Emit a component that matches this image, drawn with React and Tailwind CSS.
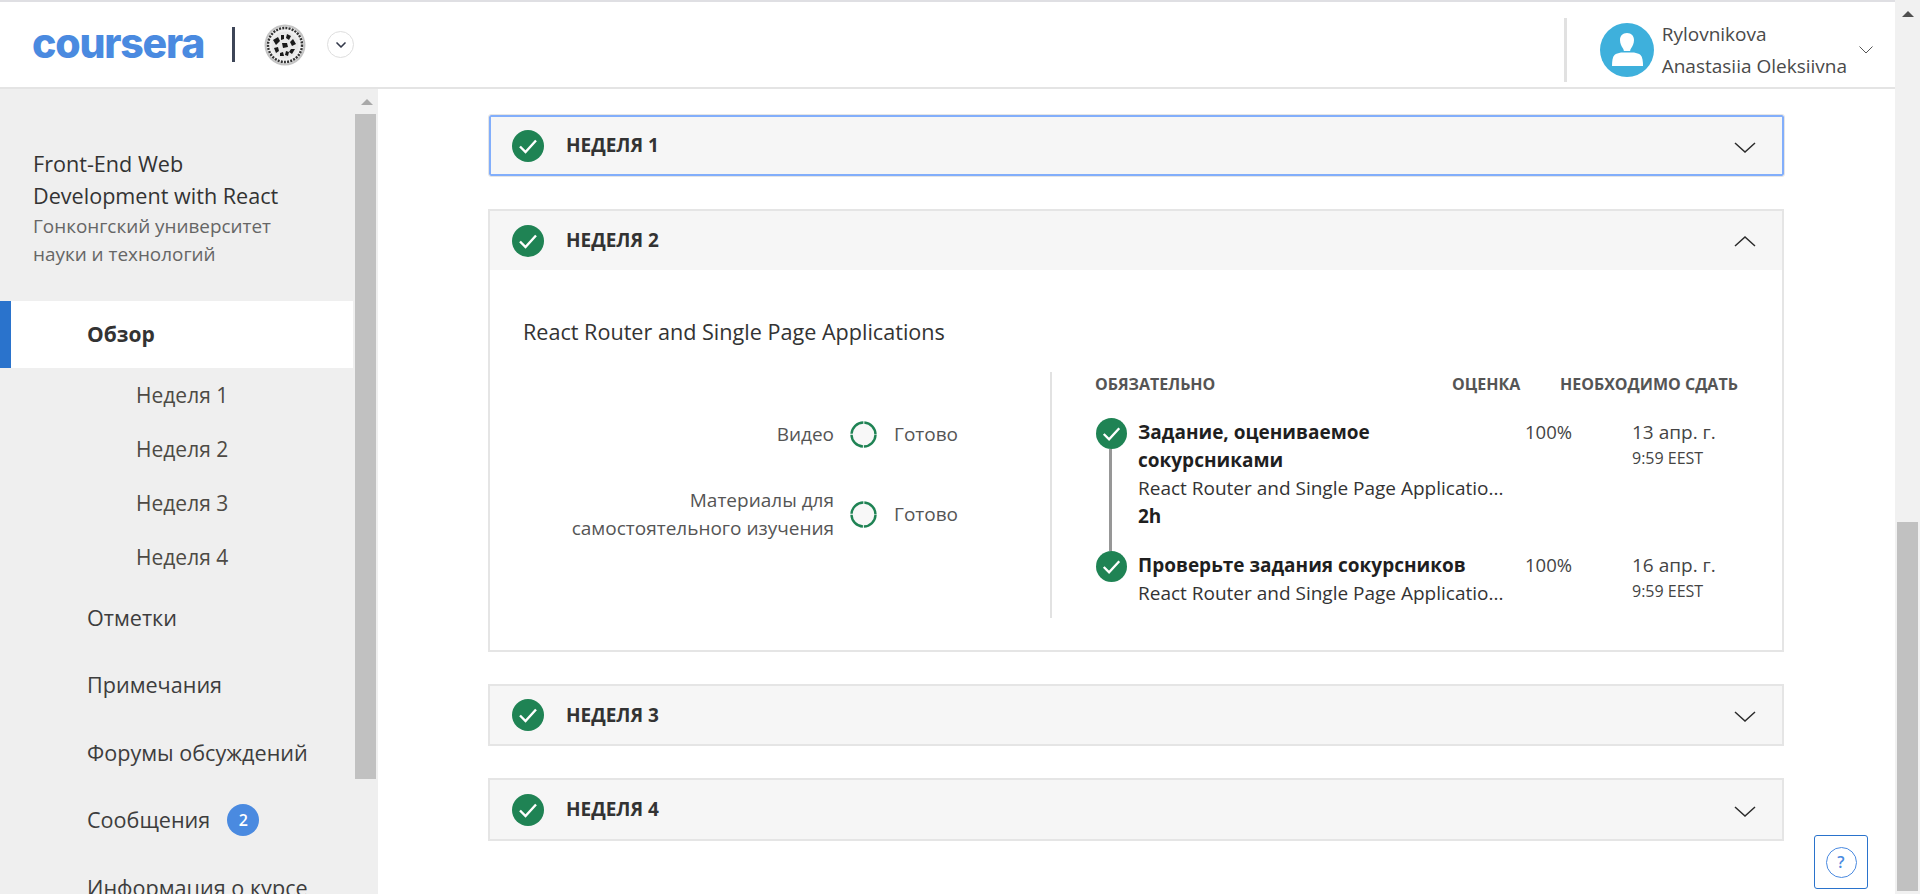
import { ChevronDown } from 'lucide-react';

const font = { fontFamily: '"Open Sans", "Noto Sans", sans-serif' };

function CheckBadge({ size = 32 }) {
  return (
    <svg width={size} height={size} viewBox="0 0 32 32" className="shrink-0">
      <circle cx="16" cy="16" r="16" fill="#1f8354" />
      <path d="M8 16.5l5.5 5.5L24 10.5" fill="none" stroke="#fff" strokeWidth="2.4" />
    </svg>
  );
}

function Chevron({ up }) {
  return (
    <svg width="24" height="14" viewBox="0 0 24 14" className="shrink-0">
      <path d={up ? 'M2 12L12 3l10 9' : 'M2 2l10 9 10-9'} fill="none" stroke="#2b2b2b" strokeWidth="1.5" />
    </svg>
  );
}

function Ring() {
  return (
    <svg width="27" height="27" viewBox="0 0 27 27" className="shrink-0">
      <circle cx="13.5" cy="13.5" r="12" fill="#f8f8f8" />
      <circle cx="13.5" cy="13.5" r="12" fill="none" stroke="#1f8354" strokeWidth="2.4" strokeDasharray="17.85 1" strokeDashoffset="-0.5" />
    </svg>
  );
}

function Seal() {
  return (
    <svg width="42" height="42" viewBox="0 0 42 42" className="shrink-0">
      <circle cx="21" cy="21" r="20.5" fill="#c4c4c4" />
      <circle cx="21" cy="21" r="18.5" fill="#f0f0f0" />
      <circle cx="21" cy="21" r="17" fill="none" stroke="#333" strokeWidth="2.4" strokeDasharray="2 1.2" />
      <circle cx="21" cy="21" r="13.5" fill="#e8e8e8" />
      <path d="M9 16l5-3 2 4-4 4zM17 11l3 0 0 4-3 1zM23 10l4 2-2 4-3-2zM29 15l3 5-4 2-2-4zM10 24l4-1 1 4-3 2zM18 19l5 0 1 4-5 1zM27 25l4 0-3 5-3-2zM16 29l3-1 1 4-4 0zM22 27l3 1-1 4-3-1z" fill="#1a1a1a" />
    </svg>
  );
}

function Logo() {
  return (
    <span className="text-[41px] leading-none font-extrabold tracking-[-1.2px] text-[#4a8ae0]" style={{ fontFamily: 'Inter, sans-serif' }}>
      coursera
    </span>
  );
}

function Header() {
  return (
    <header className="h-[89px] shrink-0 flex items-center bg-white border-t-2 border-b-2 border-t-[#dfdfe3] border-b-[#e4e4e4]">
      <div className="ml-8 mb-[2px] w-[172px] flex items-center h-9"><Logo /></div>
      <div className="ml-7 w-[3px] h-[35px] bg-[#3d4557]"></div>
      <div className="ml-[29px]"><Seal /></div>
      <div className="ml-[21px] w-[27px] h-[27px] rounded-full border border-[#dedede] flex items-center justify-center">
        <ChevronDown size={16} strokeWidth={2.5} color="#33394a" />
      </div>
      <div className="ml-auto mt-[10px] flex items-center">
        <div className="w-[3px] h-[64px] bg-[#e1e1e1]"></div>
        <div className="ml-[33px] w-[54px] h-[54px] rounded-full bg-[#3eb0dc] shrink-0 flex items-center justify-center">
          <svg width="54" height="54" viewBox="0 0 54 54">
            <path d="M27 10c-4.500 0-7 3-7 7 0 3.500 1.500 6.500 3 8.500 .6 1 .8 1.500 .8 2.500h6.400c0-1 .2-1.500 .8-2.500 1.500-2 3-5 3-8.500 0-4-2.500-7-7-7z" fill="#fff" />
            <path d="M12 43c0-5 .5-9 2.500-11 1.500-1.500 4-2 6.500-2.500h13c2.500 .5 5 1 6.500 2.500 2 2 2.500 6 2.500 11z" fill="#fff" />
          </svg>
        </div>
        <div className="ml-2 text-[19px] leading-8 text-[#4a4a4a] whitespace-nowrap">
          <div>Rylovnikova</div>
          <div>Anastasiia Oleksiivna</div>
        </div>
        <svg width="14" height="8" viewBox="0 0 14 8" className="ml-3 mr-[22px] shrink-0">
          <path d="M0.5 0.5L7 7l6.500-6.500" fill="none" stroke="#555" strokeWidth="1" />
        </svg>
      </div>
    </header>
  );
}

const weeks = ['Неделя 1', 'Неделя 2', 'Неделя 3', 'Неделя 4'];

function Sidebar() {
  return (
    <aside className="w-[378px] shrink-0 bg-[#efefef] flex overflow-hidden">
      <div className="w-[353px] shrink-0">
        <div className="pl-[33px] pt-[59px] pb-[33px]">
          <div className="text-[21.6px] leading-8 text-[#333]">
            <div>Front-End Web</div>
            <div>Development with React</div>
          </div>
          <div className="text-[18.9px] leading-7 text-[#666]">
            <div>Гонконгский университет</div>
            <div>науки и технологий</div>
          </div>
        </div>
        <div className="h-[67px] bg-white border-l-[11px] border-l-[#2a73cc] pl-[76px] flex items-center text-[21px] font-bold text-[#333]">
          Обзор
        </div>
        <div className="pt-px">
          {weeks.map((w) => (
            <div key={w} className="h-[54px] pl-[136px] flex items-center text-[21px] text-[#4d4a45]">{w}</div>
          ))}
        </div>
        <div className="-mt-px text-[21.6px] text-[#3d3d3d]">
          <div className="h-[67.5px] pl-[87px] flex items-center">Отметки</div>
          <div className="h-[67.5px] pl-[87px] flex items-center">Примечания</div>
          <div className="h-[67.5px] pl-[87px] flex items-center">Форумы обсуждений</div>
          <div className="h-[67.5px] pl-[87px] flex items-center">
            Сообщения
            <span className="ml-[17px] w-8 h-8 rounded-full bg-[#4a8ae0] text-white text-[16px] font-semibold flex items-center justify-center">2</span>
          </div>
          <div className="h-[67.5px] pl-[87px] flex items-center whitespace-nowrap">Информация о курсе</div>
        </div>
      </div>
      <div className="w-[23px] shrink-0 ml-[2px] flex flex-col items-stretch">
        <div className="h-[25px] flex items-center justify-center">
          <div className="w-0 h-0 border-l-[6px] border-r-[6px] border-b-[6px] border-l-transparent border-r-transparent border-b-[#a9a9a9]"></div>
        </div>
        <div className="h-[665px] w-[21px] bg-[#c1c1c1]"></div>
      </div>
    </aside>
  );
}

function WeekRow({ label, up, focused, height = 'h-[59px]' }) {
  return (
    <div className={`flex items-center bg-[#f6f6f6] pr-[25px] ${focused ? 'h-[61px] ml-px pl-[21px] border-2 border-[#82aefb] rounded-[2px] outline outline-1 outline-[#e5e5e5]' : `${height} pl-[22px]`}`}>
      <CheckBadge />
      <div className="ml-[22px] text-[19px] font-bold text-[#333] uppercase">{label}</div>
      <div className={`ml-auto ${up ? '' : 'mt-1'}`}><Chevron up={up} /></div>
    </div>
  );
}

function ClosedWeek({ label, focused, height }) {
  if (focused) return <WeekRow label={label} focused />;
  return (
    <div className="border-2 border-[#e5e5e5]">
      <WeekRow label={label} height={height} />
    </div>
  );
}

function TaskRow({ title, time, date, last }) {
  return (
    <div className="flex">
      <div className="w-[43px] shrink-0 flex flex-col pl-px">
        <CheckBadge size={31} />
        {!last && <div className="ml-[13px] w-[3px] flex-1 bg-[#979797]"></div>}
      </div>
      <div className={`w-[387px] shrink-0 text-[19px] leading-7 ${last ? '' : 'pb-[21px]'}`}>
        <div className="font-bold text-[#1f1f1f]">{title}</div>
        <div className="text-[#333] whitespace-nowrap overflow-hidden">React Router and Single Page Applicatio...</div>
        {time && <div className="font-bold text-[#1f1f1f]">{time}</div>}
      </div>
      <div className="w-[107px] shrink-0 text-[18.5px] leading-7 text-[#444]">100%</div>
      <div className="text-[#444]">
        <div className="text-[19px] leading-7">{date}</div>
        <div className="text-[16px] leading-6">9:59 EEST</div>
      </div>
    </div>
  );
}

function OpenWeek() {
  return (
    <div className="border-2 border-[#e5e5e5]">
      <WeekRow label="Неделя 2" up />
      <div className="pl-[33px] pt-12 pb-[32px] bg-white">
        <div className="text-[21.6px] leading-7 text-[#333]">React Router and Single Page Applications</div>
        <div className="mt-[26px] flex">
          <div className="w-[529px] shrink-0 pt-12 border-r-2 border-r-[#e2e2e2] text-[19px] leading-7 text-[#555]">
            <div className="flex items-center">
              <div className="w-[311px] text-right">Видео</div>
              <div className="ml-4"><Ring /></div>
              <div className="ml-[17px]">Готово</div>
            </div>
            <div className="flex items-center mt-[38px]">
              <div className="w-[311px] text-right">Материалы для<br />самостоятельного изучения</div>
              <div className="ml-4"><Ring /></div>
              <div className="ml-[17px]">Готово</div>
            </div>
          </div>
          <div className="pl-[43px] h-[246px]">
            <div className="flex h-6 items-center text-[16px] font-bold text-[#555] uppercase whitespace-nowrap">
              <div className="w-[357px]">Обязательно</div>
              <div className="w-[108px]">Оценка</div>
              <div>Необходимо сдать</div>
            </div>
            <div className="mt-[22px]">
              <TaskRow title={<>Задание, оцениваемое<br />сокурсниками</>} time="2h" date="13 апр. г." />
              <TaskRow title="Проверьте задания сокурсников" date="16 апр. г." last />
            </div>
          </div>
        </div>
      </div>
    </div>
  );
}

export default function App() {
  return (
    <div className="relative w-full h-[894px] flex overflow-hidden bg-white" style={font}>
      <div className="flex-1 min-w-0 flex flex-col">
        <Header />
        <div className="flex flex-1 min-h-0">
          <Sidebar />
          <main className="flex-1 min-w-0 pl-[110px] pr-[111px] pt-[26px] flex flex-col">
            <ClosedWeek label="Неделя 1" focused />
            <div className="mt-[33px]"><OpenWeek /></div>
            <div className="mt-8"><ClosedWeek label="Неделя 3" height="h-[58px]" /></div>
            <div className="mt-8"><ClosedWeek label="Неделя 4" height="h-[59px]" /></div>
          </main>
        </div>
      </div>
      <div className="w-[25px] shrink-0 bg-[#f1f1f1] flex flex-col pl-[2px]">
        <div className="h-[27px] flex items-center justify-center pr-[2px]">
          <div className="w-0 h-0 border-l-[6px] border-r-[6px] border-b-[6px] border-l-transparent border-r-transparent border-b-[#505050]"></div>
        </div>
        <div className="mt-[495px] h-[369px] w-[21px] bg-[#c1c1c1]"></div>
      </div>
      {/* help button sits over the page */}
      <button className="absolute left-[1814px] top-[835px] w-[54px] h-[54px] bg-white border border-[#2a73cc] rounded-[3px] flex items-center justify-center">
        <span className="w-[31px] h-[31px] rounded-full border-[1.5px] border-[#4a8ae0] text-[#4a8ae0] text-[16px] font-semibold flex items-center justify-center">?</span>
      </button>
    </div>
  );
}
